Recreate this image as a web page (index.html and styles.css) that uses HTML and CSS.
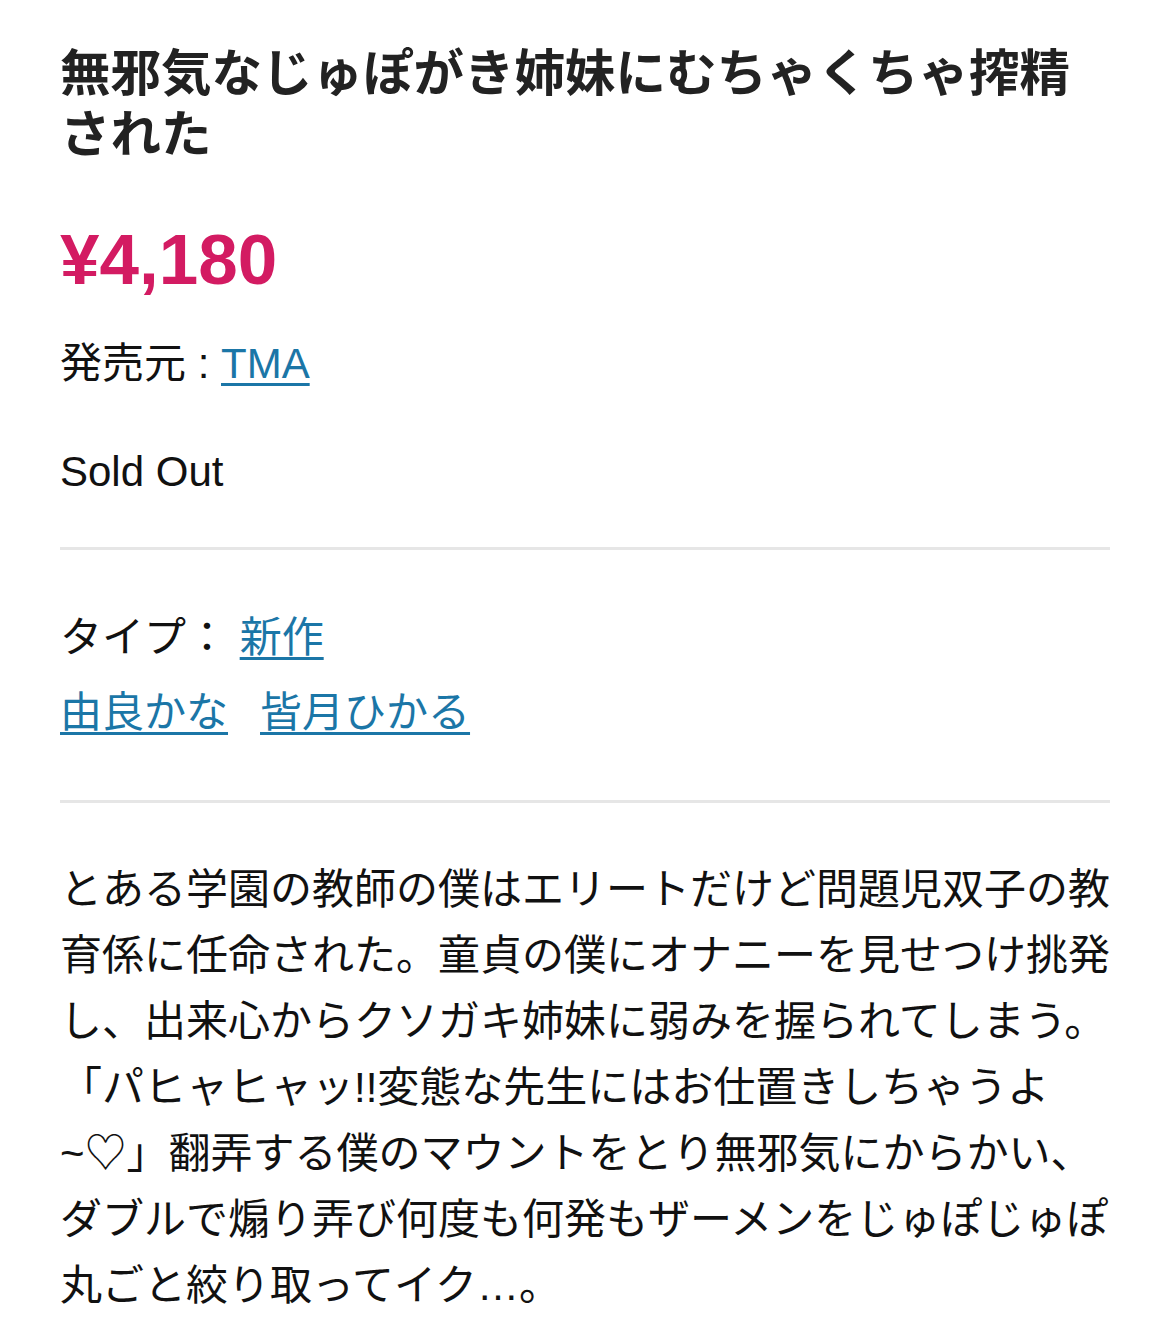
FILE: index.html
```html
<!DOCTYPE html>
<html lang="ja">
<head>
<meta charset="utf-8">
<title>無邪気なじゅぽがき姉妹にむちゃくちゃ搾精された</title>
<link rel="stylesheet" href="styles.css">
</head>
<body>
<main class="product">
  <h1 class="title">無邪気なじゅぽがき姉妹にむちゃくちゃ搾精された</h1>
  <div class="price">¥4,180</div>
  <p class="vendor">発売元 : <a href="#" class="link">TMA</a></p>
  <p class="stock">Sold Out</p>
  <hr class="rule">
  <div class="meta">
    <p class="meta-line">タイプ： <a href="#" class="link">新作</a></p>
    <p class="meta-line tags"><a href="#" class="link">由良かな</a><a href="#" class="link">皆月ひかる</a></p>
  </div>
  <hr class="rule">
  <p class="desc">とある学園の教師の僕はエリートだけど問題児双子の教育係に任命された。童貞の僕にオナニーを見せつけ挑発し、出来心からクソガキ姉妹に弱みを握られてしまう。「パヒャヒャッ!!変態な先生にはお仕置きしちゃうよ~♡」翻弄する僕のマウントをとり無邪気にからかい、ダブルで煽り弄び何度も何発もザーメンをじゅぽじゅぽ丸ごと絞り取ってイク…。</p>
</main>
</body>
</html>
```

FILE: styles.css
```css
html, body {
  margin: 0;
  padding: 0;
  background: #ffffff;
}

body {
  font-family: "Liberation Sans", "Noto Sans CJK JP", sans-serif;
  color: #111111;
}

.product {
  width: 1050px;
  padding: 43px 60px 0;
}

.title {
  margin: 0;
  font-size: 50.5px;
  line-height: 61px;
  font-weight: 700;
  color: #222222;
}

.price {
  margin-top: 60px;
  font-size: 71px;
  line-height: 70px;
  font-weight: 700;
  color: #d31b62;
}

.vendor {
  margin: 44px 0 0;
  font-size: 42px;
  line-height: 50px;
}

.stock {
  margin: 58px 0 0;
  font-size: 42px;
  line-height: 50px;
}

.link {
  color: #1b76a7;
  text-decoration: underline;
  text-decoration-thickness: 3px;
  text-underline-offset: 5px;
}

.rule {
  margin: 50px 0 0;
  border: 0;
  height: 3px;
  background: #e6e6e6;
}

.meta {
  margin-top: 50px;
}

.meta-line {
  margin: 0;
  font-size: 42px;
  line-height: 75px;
}

.tags {
  display: flex;
  gap: 32px;
}

.desc {
  margin: 54px 0 0;
  font-size: 42px;
  line-height: 66px;
  color: #111111;
}
```
